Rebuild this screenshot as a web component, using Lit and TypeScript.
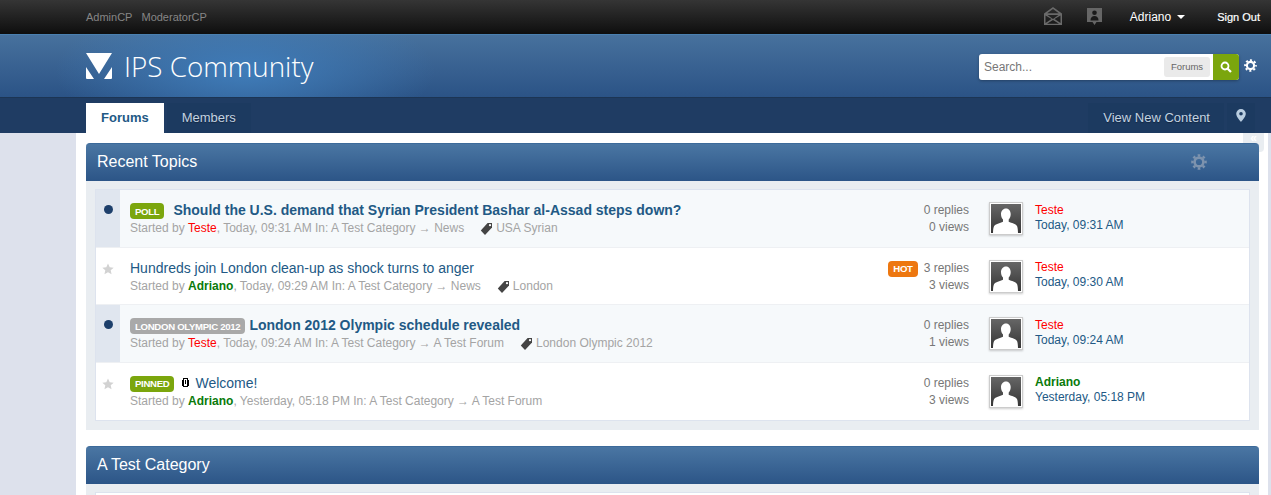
import { LitElement, html, css } from "lit";
import { customElement } from "lit/decorators.js";

const gear = (size: number, color: string) => html`<svg width=${size} height=${size} viewBox="0 0 16 16" aria-hidden="true">
  <circle cx="8" cy="8" r="4.4" fill="none" stroke=${color} stroke-width="2.6"></circle>
  <circle cx="8" cy="8" r="6.6" fill="none" stroke=${color} stroke-width="2.4" pathLength="64" stroke-dasharray="4 4" stroke-dashoffset="2"></circle>
</svg>`;

const tag = html`<svg class="tag-ic" width="13" height="14" viewBox="0 0 13 14" aria-hidden="true">
  <path d="M7.6 1H12v4.6L5 13 .8 8.6z" fill="#444"></path>
  <circle cx="10" cy="3.2" r="1.1" fill="#fff"></circle>
</svg>`;

const star = html`<svg width="12" height="12" viewBox="0 0 24 24" aria-hidden="true"><path d="M12 1l3.4 7.400 8 .9-6 5.400 1.700 8L12 18.600 4.900 22.700l1.700-8-6-5.400 8-.9z" fill="#d2d2d2"></path></svg>`;

const dot = html`<svg width="9" height="9" viewBox="0 0 9 9" aria-hidden="true"><circle cx="4.500" cy="4.500" r="4.500" fill="#1d3f6b"></circle></svg>`;

const clip = html`<svg class="clip" width="8" height="11" viewBox="0 0 8 11" aria-hidden="true" shape-rendering="crispEdges">
  <path d="M2 1.500h4v8H2zM1 2.500v6M7 2.500v6M4 3v4" fill="#fff" stroke="#000" stroke-width="1"></path>
</svg>`;

const avatar = html`<span class="thumb"><svg width="30" height="29" viewBox="0 0 30 29" aria-hidden="true">
  <defs><linearGradient id="ag" x1="0" y1="0" x2="0" y2="1"><stop offset="0" stop-color="#666"></stop><stop offset="1" stop-color="#363636"></stop></linearGradient></defs>
  <rect width="30" height="29" fill="url(#ag)"></rect>
  <path d="M15 4.500c3 0 4.700 2.500 4.700 5.500 0 2.300-.8 4.300-2 5.500v2.200c3 1.300 7 2 8.300 4.300.7 1.300 1 4.500 1 7.500H2c0-3 .3-6 1-7.300 1.300-2.300 6-3.200 9-4.500v-2.200c-1.200-1.200-2-3.200-2-5.500 0-3 2-5.500 5-5.500z" fill="#fff"></path>
</svg></span>`;

type Topic = {
  unread: boolean; badge?: string; badgeClass?: string; title: string; clip?: boolean;
  by: string; byClass: string; when: string; forum: string; tag?: string;
  hot?: boolean; replies: string; views: string; last: string; lastClass: string; lastWhen: string;
};

const topics: Topic[] = [
  { unread: true, badge: "POLL", badgeClass: "green gap9", title: "Should the U.S. demand that Syrian President Bashar al-Assad steps down?",
    by: "Teste", byClass: "red", when: "Today, 09:31 AM", forum: "News", tag: "USA Syrian",
    replies: "0 replies", views: "0 views", last: "Teste", lastClass: "red", lastWhen: "Today, 09:31 AM" },
  { unread: false, title: "Hundreds join London clean-up as shock turns to anger",
    by: "Adriano", byClass: "grn", when: "Today, 09:29 AM", forum: "News", tag: "London", hot: true,
    replies: "3 replies", views: "3 views", last: "Teste", lastClass: "red", lastWhen: "Today, 09:30 AM" },
  { unread: true, badge: "LONDON OLYMPIC 2012", badgeClass: "grey gap4", title: "London 2012 Olympic schedule revealed",
    by: "Teste", byClass: "red", when: "Today, 09:24 AM", forum: "A Test Forum", tag: "London Olympic 2012",
    replies: "0 replies", views: "1 views", last: "Teste", lastClass: "red", lastWhen: "Today, 09:24 AM" },
  { unread: false, badge: "PINNED", badgeClass: "green gap7", clip: true, title: "Welcome!",
    by: "Adriano", byClass: "grn", when: "Yesterday, 05:18 PM", forum: "A Test Forum",
    replies: "0 replies", views: "3 views", last: "Adriano", lastClass: "grn bold", lastWhen: "Yesterday, 05:18 PM" },
];

@customElement("app-root")
export class AppRoot extends LitElement {
  static styles = css`
    :host { display: block; height: 495px; overflow: hidden; position: relative; background: #dde1ec; font: 12px "Liberation Sans", Arial, sans-serif; color: #5a5a5a; }
    svg { display: block; flex: none; }

    .top { height: 34px; background: linear-gradient(#353535, #0e0e0e); display: flex; align-items: center; padding: 0 11px 0 86px; font-size: 11px; color: #868686; }
    .top .adm { margin-right: 9px; }
    .top .sp { flex: 1; }
    .top .env { margin-right: 25px; margin-top: -2px; }
    .top .note { margin-right: 28px; margin-top: -1px; }
    .user { color: #fff; font-size: 12px; display: flex; align-items: center; gap: 6px; margin-right: 32px; }
    .caret { width: 0; height: 0; border: 4px solid transparent; border-top-color: #fff; border-bottom: 0; }
    .out { color: #fff; font-size: 11px; font-weight: 400; -webkit-text-stroke: .2px #fff; }

    .brand { height: 62px; border-top: 1px solid #4a80b0; border-bottom: 1px solid #1c3554; padding: 0 14px 0 86px; display: flex; align-items: center;
      background: radial-gradient(ellipse 190px 70px at 245px 36px, #3f7cb9 0%, rgba(63,124,185,0) 100%), linear-gradient(#47719d, #2b5386); }
    .logo { display: flex; align-items: center; gap: 12px; color: #fff; font: 300 27.800px "Open Sans", sans-serif; margin-top: -1px; }
    .search { margin-left: auto; display: flex; align-items: center; margin-top: 1px; }
    .sbox { width: 260px; height: 26px; background: #fff; border-radius: 3px; display: flex; align-items: center; box-shadow: 0 1px 3px rgba(0,0,0,.3); overflow: hidden; }
    .sbox .ph { flex: 1; padding-left: 5px; color: #777; font-size: 12px; }
    .chip { background: #eaeaea; border-radius: 3px; color: #666; font-size: 9.500px; height: 20px; width: 46px; display: flex; align-items: center; justify-content: center; margin-right: 3px; }
    .go { width: 26px; height: 26px; background: #7ba60d; display: flex; align-items: center; justify-content: center; }
    .search .g { margin-left: 5px; margin-top: -2px; }

    nav { height: 35px; background: #1f3c63; display: flex; align-items: flex-end; padding: 0 16px 0 86px; font-size: 13px; }
    .tab { height: 30px; box-sizing: border-box; padding: 0 15px 2px; display: flex; align-items: center; color: #c3d3e1; background: #1c3a60; margin-right: 3px; text-shadow: 0 1px 1px rgba(0,0,0,.35); }
    .tab.on { background: #fff; color: #225985; font-weight: 700; text-shadow: none; }
    .tab.sp { margin-left: auto; padding: 0 14px 2px 15px; }
    .tab.pin { padding: 0 9px; margin-right: 0; width: 28px; }
    .tab.pin svg { margin-top: -5px; }

    main { margin-left: 76px; width: 1192px; min-height: 362px; background: #fff; box-sizing: border-box; padding: 10px 9px 0 10px; }
    .toggle { position: absolute; left: 1243px; top: 133px; width: 21px; height: 19px; background: #e9edf1; border-radius: 0 0 4px 4px; color: #fff; font-size: 12px; font-weight: 700; text-align: center; line-height: 10px; }
    h3 { margin: 0; height: 38px; padding: 0 11px 2px; border-radius: 4px 4px 0 0; border-top: 1px solid #3c6a9a; box-sizing: border-box; display: flex; align-items: center; font-weight: 400; font-size: 16px; color: #fff; background: linear-gradient(#4a76a3, #2c5587); position: relative; }
    h3 .cog { position: absolute; left: 1105px; top: 10px; }
    .cat { background: #e9edf1; padding: 8px 9px 9px; margin-bottom: 16px; }
    .list { background: #fff; border: 1px solid #dde3ee; }
    .list.stub { height: 60px; }

    .row { height: 56.500px; display: flex; border-bottom: 1px solid #eef0f3; }
    .row:last-child { border-bottom: 0; height: 57.500px; }
    .row.un { background: #f6f9fb; }
    .mark { width: 24px; flex: none; display: flex; justify-content: center; padding-top: 15px; box-sizing: border-box; }
    .un .mark { background: #e0e6ef; }
    .body { flex: 1; padding: 11.500px 0 0 10px; min-width: 0; }
    .ttl { display: flex; align-items: center; height: 17px; font-size: 14px; color: #225985; }
    .ttl b { font-weight: 700; }
    .ttl .t { font-weight: 400; }
    .badge { height: 16px; border-radius: 4px; padding: 0 5px; font-size: 9.600px; letter-spacing: -.3px; font-weight: 700; color: #fff; display: flex; align-items: center; margin-top: 2px; }
    .green { background: #7ba60d; }
    .grey { background: #a9a9a9; }
    .orange { background: #ed7710; }
    .gap9 { margin-right: 9px; }
    .gap7 { margin-right: 7px; }
    .gap4 { margin-right: 4px; }
    .clip { margin-right: 6px; }
    .meta { display: flex; align-items: center; height: 16px; margin-top: 1.500px; color: #a4a4a4; font-size: 12px; white-space: pre; }
    .red { color: #f00; }
    .grn { color: #0a7a0a; font-weight: 700; }
    .tag-ic { margin: 2px 3px 0 16px; }

    .stats { width: 120px; flex: none; display: flex; justify-content: flex-end; gap: 6px; padding-top: 12px; color: #777; text-align: right; line-height: 17px; }
    .stats .badge { align-self: flex-start; margin-top: 1px; }
    .av { flex: none; width: 34px; margin-left: 20px; padding-top: 12px; }
    .thumb { display: block; width: 30px; height: 29px; padding: 1px; background: #fff; border: 1px solid #ccc; box-shadow: 0 1px 2px rgba(0,0,0,.2); }
    .posters { width: 226px; flex: none; padding: 12.500px 0 0 12px; box-sizing: border-box; line-height: 15px; color: #225985; }
    .posters .bold { font-weight: 700; }
  `;

  private topic(t: Topic) {
    return html`<div class="row ${t.unread ? "un" : ""}">
      <div class="mark">${t.unread ? dot : star}</div>
      <div class="body">
        <div class="ttl">
          ${t.badge ? html`<span class="badge ${t.badgeClass}">${t.badge}</span>` : ""}
          ${t.clip ? clip : ""}
          ${t.unread ? html`<b>${t.title}</b>` : html`<span class="t">${t.title}</span>`}
        </div>
        <div class="meta">Started by <span class=${t.byClass}>${t.by}</span>, ${t.when} In: A Test Category → ${t.forum}${t.tag ? html`${tag}<span>${t.tag}</span>` : ""}</div>
      </div>
      <div class="stats">
        ${t.hot ? html`<span class="badge orange">HOT</span>` : ""}
        <div>${t.replies}<br />${t.views}</div>
      </div>
      <div class="av">${avatar}</div>
      <div class="posters"><span class=${t.lastClass}>${t.last}</span><br />${t.lastWhen}</div>
    </div>`;
  }

  render() {
    return html`
      <div class="top">
        <span class="adm">AdminCP</span><span>ModeratorCP</span>
        <span class="sp"></span>
        <svg class="env" width="18" height="18" viewBox="0 0 18 18" aria-hidden="true"><path d="M9 0l9 6.500V18H0V6.500zM9 2L3.200 6.300h11.600zM3.500 8l5.500 4 5.500-4zM1.500 8.500v7.500L7.500 12zM16.500 8.500L10.500 12l6 4zM9 13L3 16.800h12z" fill="#6a6a6a" fill-rule="evenodd"></path></svg>
        <svg class="note" width="15" height="17" viewBox="0 0 15 17" aria-hidden="true"><path d="M0 0h15v14h-5.500L7.500 17l-2-3H0z" fill="#666"></path><circle cx="7.500" cy="4.800" r="2.300" fill="#1a1a1a"></circle><path d="M3.500 12.500c0-3 1.500-4.500 4-4.500s4 1.500 4 4.500z" fill="#1a1a1a"></path></svg>
        <span class="user">Adriano <span class="caret"></span></span>
        <span class="out">Sign Out</span>
      </div>
      <div class="brand">
        <div class="logo">
          <svg width="26" height="26" viewBox="0 0 26 26" aria-hidden="true"><path d="M0 0h26L13 21zM0 14l8 12H1a1 1 0 0 1-1-1zM26 14l-8 12h7a1 1 0 0 0 1-1z" fill="#fff"></path></svg>
          <span>IPS Community</span>
        </div>
        <div class="search">
          <div class="sbox">
            <span class="ph">Search...</span>
            <span class="chip">Forums</span>
            <span class="go"><svg width="12" height="12" viewBox="0 0 12 12" aria-hidden="true"><circle cx="5" cy="5" r="3.500" fill="none" stroke="#fff" stroke-width="1.800"></circle><path d="M7.500 7.500L11 11" stroke="#fff" stroke-width="2.200"></path></svg></span>
          </div>
          <span class="g">${gear(13, "#fff")}</span>
        </div>
      </div>
      <nav>
        <span class="tab on">Forums</span>
        <span class="tab">Members</span>
        <span class="tab sp">View New Content</span>
        <span class="tab pin"><svg width="10" height="13" viewBox="0 0 10 13" aria-hidden="true"><path d="M5 0a4.800 4.800 0 0 1 4.800 4.800C9.800 8 5 13 5 13S.2 8 .2 4.800A4.800 4.800 0 0 1 5 0zm0 3a1.800 1.800 0 1 0 0 3.600A1.800 1.800 0 0 0 5 3z" fill="#b9cde0" fill-rule="evenodd"></path></svg></span>
      </nav>
      <main>
        <div class="toggle">«</div>
        <h3>Recent Topics <span class="cog">${gear(16, "#7d93ae")}</span></h3>
        <div class="cat"><div class="list">${topics.map((t) => this.topic(t))}</div></div>
        <h3>A Test Category</h3>
        <div class="cat"><div class="list stub"></div></div>
      </main>
    `;
  }
}
